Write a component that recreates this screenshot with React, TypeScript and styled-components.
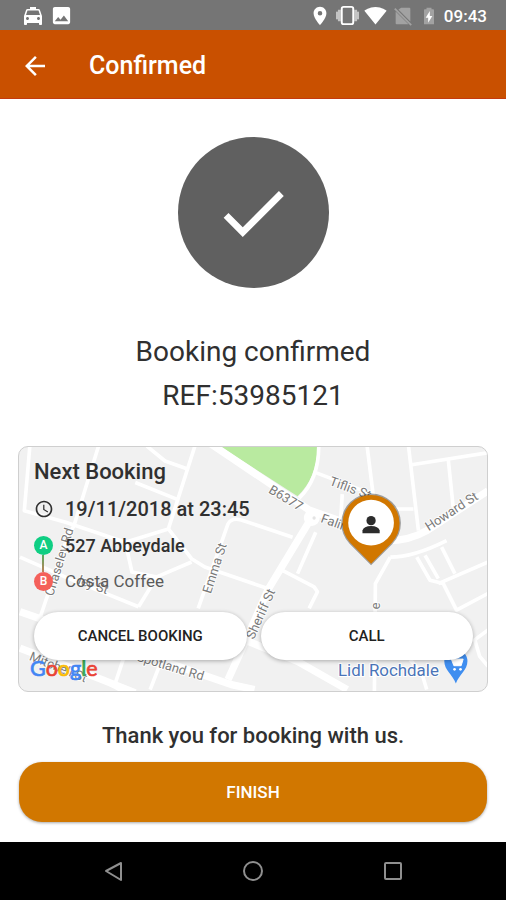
import React from "react";
import styled, { createGlobalStyle } from "styled-components";
import {
  MdLocalTaxi,
  MdImage,
  MdLocationOn,
  MdSignalWifi4Bar,
  MdArrowBack,
  MdCheck,
  MdAccessTime,
} from "react-icons/md";

const GlobalStyle = createGlobalStyle`
  * { box-sizing: border-box; }
  body { margin: 0; background: #fff; }
  body, button { font-family: Roboto, "Liberation Sans", sans-serif; }
  p, h1, h2 { margin: 0; }
  svg { display: block; flex: none; }
`;

const Screen = styled.div`
  display: flex;
  flex-direction: column;
  min-height: 100vh;
  color: #303030;
`;

const StatusBar = styled.div`
  display: flex;
  justify-content: space-between;
  align-items: center;
  height: 30px;
  padding: 1px 19px 0 21px;
  background: #757575;
  color: #fff;
`;

const StatusGroup = styled.div`
  display: flex;
  align-items: center;
  gap: 5px;
`;

const Clock = styled.span`
  font-size: 17px;
  line-height: 24px;
  font-weight: 500;
`;

const AppBar = styled.header`
  display: flex;
  align-items: center;
  gap: 39px;
  height: 69px;
  padding: 3px 20px 0;
  background: #c95000;
  border-bottom: 1px solid #c43a10;
  color: #fff;
`;

const BackButton = styled.button`
  display: flex;
  padding: 0;
  border: 0;
  background: none;
  color: inherit;
`;

const AppTitle = styled.h1`
  font-size: 25px;
  line-height: 32px;
  font-weight: 500;
`;

const Main = styled.main`
  display: flex;
  flex: 1;
  flex-direction: column;
  padding: 38px 18px 18px;
`;

const Tick = styled.div`
  display: flex;
  align-items: center;
  justify-content: center;
  align-self: center;
  width: 151px;
  height: 151px;
  border-radius: 50%;
  background: #606060;
  color: #fff;
`;

const Message = styled.div`
  margin-top: 42px;
  text-align: center;
  font-size: 28px;
  line-height: 44px;
`;

const Card = styled.section`
  position: relative;
  margin-top: 28px;
  padding: 11px 14px 31px 15px;
  border: 1px solid #cfcfcf;
  border-radius: 10px;
  overflow: hidden;
  background: #f1f1f1;
`;

const MapLayer = styled.svg`
  position: absolute;
  inset: 0;
  width: 100%;
  height: 100%;
`;

const CardBody = styled.div`
  position: relative;
  display: flex;
  flex-direction: column;
`;

const CardTitle = styled.h2`
  font-size: 22px;
  line-height: 28px;
  font-weight: 500;
`;

const When = styled.p`
  display: flex;
  align-items: center;
  gap: 12px;
  height: 36px;
  margin-top: 5px;
  font-size: 20px;
  font-weight: 500;
`;

const Stop = styled.p<{ $muted?: boolean }>`
  display: flex;
  align-items: center;
  gap: 12px;
  height: 36px;
  font-size: ${(p) => (p.$muted ? 17 : 18)}px;
  font-weight: ${(p) => (p.$muted ? 400 : 500)};
  color: ${(p) => (p.$muted ? "#5a5a5a" : "#303030")};
`;

const Marker = styled.span<{ $color: string; $linked?: boolean }>`
  position: relative;
  display: flex;
  align-items: center;
  justify-content: center;
  width: 19px;
  height: 19px;
  border-radius: 50%;
  background: ${(p) => p.$color};
  color: #fff;
  font-size: 12px;
  font-weight: 500;

  &::after {
    content: "";
    display: ${(p) => (p.$linked ? "block" : "none")};
    position: absolute;
    top: 100%;
    left: 8px;
    width: 2px;
    height: 17px;
    background: linear-gradient(#56ad60, #c0805a);
  }
`;

const IconSlot = styled.span`
  display: flex;
  justify-content: center;
  width: 19px;
`;

const Actions = styled.div`
  display: grid;
  grid-template-columns: 1fr 1fr;
  gap: 14px;
  margin-top: 13px;
`;

const PillButton = styled.button`
  height: 48px;
  border: 0;
  border-radius: 24px;
  background: #fff;
  box-shadow: 0 1px 4px rgba(0, 0, 0, 0.3);
  color: #222;
  font-size: 15px;
  font-weight: 500;
`;

const Thanks = styled.p`
  margin-top: 30px;
  text-align: center;
  font-size: 22px;
  line-height: 28px;
  font-weight: 500;
`;

const FinishButton = styled.button`
  height: 60px;
  margin: 12px 1px 0;
  border: 0;
  border-radius: 23px;
  background: #d17700;
  box-shadow: 0 1px 3px rgba(0, 0, 0, 0.35);
  color: #fff;
  font-size: 17px;
  font-weight: 500;
`;

const NavBar = styled.nav`
  display: flex;
  justify-content: center;
  align-items: center;
  gap: 116px;
  height: 58px;
  background: #000;
`;

const NavButton = styled.button`
  display: flex;
  padding: 0;
  border: 0;
  background: none;
`;

const minorRoads = [
  "M42 12 L25 210 L150 245 L330 305 L460 265 L540 15",
  "M250 12 L175 255 L155 290 L70 540",
  "M395 15 L450 60 L520 85",
  "M360 125 L485 175",
  "M460 265 L530 355 L570 380 L760 445",
  "M530 365 L425 410 L350 395 L330 305",
  "M425 410 L370 500",
  "M550 505 L640 250 Q650 230 680 238 L835 290",
  "M12 350 L160 415 L370 500",
  "M905 275 L850 400 M800 388 L900 440 L910 455 L885 505",
  "M905 95 L1075 160 M1060 15 L1080 175",
  "M1185 15 L1215 270 M1190 72 L1425 35",
  "M1305 55 L1320 200 M1120 205 L1200 205 M985 160 L980 240",
  "M1130 350 L1085 430 L1082 760",
  "M1210 350 L1250 420 L1290 430 L1330 510 L1425 460",
  "M1235 345 L1275 415 M1285 320 L1325 400 M1275 430 L1425 365",
  "M1425 570 L1385 600 L1400 650 L1425 680",
  "M330 640 L295 745 M440 660 L405 750",
  "M240 710 L330 760 M1190 660 L1225 700 L1240 750",
  "M1130 350 Q1200 350 1300 300",
  "M914 15 Q914 115 855 172",
];

const mainRoads = [
  "M582 4 L885 208 L990 245 L1100 300 Q1180 305 1240 270 L1425 150",
  "M890 235 L760 450 L690 610 L640 720",
  "M12 515 L200 580 L650 735 L720 750",
  "M12 625 L260 720 L360 760",
  "M690 600 L850 665 L1000 750",
];

function BookingMap() {
  return (
    <MapLayer viewBox="9 17 1413 738" preserveAspectRatio="xMidYMid slice" aria-hidden="true">
      <path d="M610 12 H910 Q910 110 850 166 Z" fill="#b9eaa0" />
      <g fill="none" stroke="#fff" strokeLinejoin="round">
        <g strokeWidth="11">
          {minorRoads.map((d) => (
            <path key={d} d={d} />
          ))}
        </g>
        <g strokeWidth="22">
          {mainRoads.map((d) => (
            <path key={d} d={d} />
          ))}
        </g>
      </g>
      <circle cx="893" cy="232" r="24" fill="#fff" />
      <circle cx="900" cy="232" r="5" fill="#e4e4e4" />
      <g
        fill="#7a7a7a"
        stroke="#fff"
        strokeWidth="5"
        paintOrder="stroke"
        fontFamily="Roboto, sans-serif"
        fontSize="39"
      >
        <text transform="translate(760 154) rotate(31)">B6377</text>
        <text transform="translate(944 132) rotate(20)">Tiflis St</text>
        <text transform="translate(918 244) rotate(20)">Falinge</text>
        <text transform="translate(1246 272) rotate(-33)">Howard St</text>
        <text transform="translate(588 462) rotate(-72)">Emma St</text>
        <text transform="translate(718 600) rotate(-66)">Sheriff St</text>
        <text transform="translate(112 470) rotate(-73)">Chaseley Rd</text>
        <text transform="translate(185 430) rotate(20)">ley St</text>
        <text transform="translate(362 662) rotate(17)">Spotland Rd</text>
        <text transform="translate(38 660) rotate(22)">Mitchell St</text>
        <text transform="translate(1098 508) rotate(-88)">e</text>
      </g>
      <text
        x="972"
        y="709"
        fontFamily="Roboto, sans-serif"
        fontSize="51"
        fill="#4a74b8"
        stroke="#fff"
        strokeWidth="6"
        paintOrder="stroke"
      >
        Lidl Rochdale
      </text>
      <path
        d="M1328 732 C1318 704 1293 692 1293 664 A35 35 0 0 1 1363 664 C1363 692 1338 704 1328 732 Z"
        fill="#3f8ef0"
      />
      <path
        d="M1304 652 H1312 L1322 678 H1344 L1350 658 H1315 Z"
        fill="#fff"
        stroke="#fff"
        strokeWidth="3"
      />
      <circle cx="1324" cy="689" r="4" fill="#fff" />
      <circle cx="1342" cy="689" r="4" fill="#fff" />
      <text x="42" y="709" fontFamily="Lato, sans-serif" fontSize="65" strokeWidth="2">
        <tspan fill="#4285f4" stroke="#4285f4">G</tspan>
        <tspan fill="#ea4335" stroke="#ea4335">o</tspan>
        <tspan fill="#fbbc05" stroke="#fbbc05">o</tspan>
        <tspan fill="#4285f4" stroke="#4285f4">g</tspan>
        <tspan fill="#34a853" stroke="#34a853">l</tspan>
        <tspan fill="#ea4335" stroke="#ea4335">e</tspan>
      </text>
      <path d="M1072 375 L1007 310 A90 90 0 1 1 1137 310 Z" fill="#000" opacity="0.35" />
      <path d="M1072 370 L1009 307 A86 86 0 1 1 1135 307 Z" fill="#d17700" />
      <circle cx="1072" cy="246" r="69" fill="#fff" />
      <circle cx="1072" cy="240" r="14" fill="#2c2c2c" />
      <path d="M1046 278 V270 Q1050 256 1072 256 Q1094 256 1098 270 V278 Z" fill="#2c2c2c" />
    </MapLayer>
  );
}

function VibrateIcon() {
  return (
    <svg width="23" height="23" viewBox="0 0 24 24">
      <rect x="0" y="8" width="3" height="8" fill="#c4c4c4" />
      <rect x="21" y="8" width="3" height="8" fill="#c4c4c4" />
      <rect x="2" y="6" width="3" height="12" fill="#c4c4c4" />
      <rect x="19" y="6" width="3" height="12" fill="#c4c4c4" />
      <rect x="6" y="3" width="12" height="18" rx="2" fill="#757575" stroke="#fff" strokeWidth="2" />
    </svg>
  );
}

function NoSimIcon() {
  return (
    <svg width="22" height="22" viewBox="0 0 24 24">
      <path d="M10 3h9a1 1 0 0 1 1 1v14L7 5z M4 7l14 14H5a1 1 0 0 1-1-1z" fill="#a2a2a2" />
      <path d="M3 4l18 18" stroke="#a2a2a2" strokeWidth="2" />
    </svg>
  );
}

function ChargingIcon() {
  return (
    <svg width="20" height="20" viewBox="0 0 24 24">
      <path d="M9 2h6v2h2a1 1 0 0 1 1 1v17H6V5a1 1 0 0 1 1-1h2z" fill="#a2a2a2" />
      <path d="M11 20v-6H8l5-8v6h3z" fill="#fff" />
    </svg>
  );
}

export default function App() {
  return (
    <>
      <GlobalStyle />
      <Screen>
        <StatusBar>
          <StatusGroup>
            <MdLocalTaxi size={24} />
            <MdImage size={23} />
          </StatusGroup>
          <StatusGroup>
            <MdLocationOn size={22} />
            <VibrateIcon />
            <MdSignalWifi4Bar size={23} />
            <NoSimIcon />
            <ChargingIcon />
            <Clock>09:43</Clock>
          </StatusGroup>
        </StatusBar>
        <AppBar>
          <BackButton aria-label="Back">
            <MdArrowBack size={30} />
          </BackButton>
          <AppTitle>Confirmed</AppTitle>
        </AppBar>
        <Main>
          <Tick>
            <MdCheck size={82} />
          </Tick>
          <Message>
            <p>Booking confirmed</p>
            <p>REF:53985121</p>
          </Message>
          <Card>
            <BookingMap />
            <CardBody>
              <CardTitle>Next Booking</CardTitle>
              <When>
                <IconSlot>
                  <MdAccessTime size={20} />
                </IconSlot>
                19/11/2018 at 23:45
              </When>
              <Stop>
                <Marker $color="#0fce83" $linked>
                  A
                </Marker>
                527 Abbeydale
              </Stop>
              <Stop $muted>
                <Marker $color="#f4605a">B</Marker>
                Costa Coffee
              </Stop>
              <Actions>
                <PillButton>CANCEL BOOKING</PillButton>
                <PillButton>CALL</PillButton>
              </Actions>
            </CardBody>
          </Card>
          <Thanks>Thank you for booking with us.</Thanks>
          <FinishButton>FINISH</FinishButton>
        </Main>
        <NavBar>
          <NavButton aria-label="Back">
            <svg width="24" height="24" viewBox="0 0 24 24" fill="none" stroke="#8f8f8f" strokeWidth="2">
              <path d="M20 4v17L5 12z" strokeLinejoin="round" />
            </svg>
          </NavButton>
          <NavButton aria-label="Home">
            <svg width="24" height="24" viewBox="0 0 24 24" fill="none" stroke="#8f8f8f" strokeWidth="2">
              <circle cx="12" cy="12" r="9" />
            </svg>
          </NavButton>
          <NavButton aria-label="Recent apps">
            <svg width="24" height="24" viewBox="0 0 24 24" fill="none" stroke="#8f8f8f" strokeWidth="2">
              <rect x="4" y="4" width="16" height="16" rx="1" />
            </svg>
          </NavButton>
        </NavBar>
      </Screen>
    </>
  );
}
